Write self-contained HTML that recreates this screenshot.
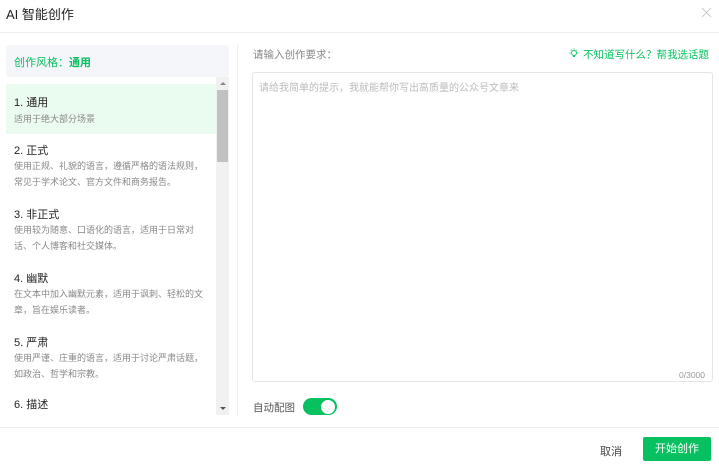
<!DOCTYPE html><html><head><meta charset="utf-8"><style>
*{margin:0;padding:0;box-sizing:border-box}
body{width:719px;height:464px;background:#fff;font-family:"Liberation Sans","Noto Sans CJK SC",sans-serif;position:relative;overflow:hidden;color:#333}
.a{position:absolute;white-space:nowrap}
.t{font-size:11px;color:#222}
.d{font-size:9px;color:#888;line-height:16px}
</style></head><body>
<div class="a" style="left:6px;top:4px;font-size:13px;color:#222">AI 智能创作</div>
<svg class="a" style="left:701px;top:7px" width="11" height="11" viewBox="0 0 11 11"><path d="M1 1L10 10M10 1L1 10" stroke="#bbb" stroke-width="0.8"/></svg>
<div class="a" style="left:0;top:32px;width:719px;height:1px;background:#eee"></div>
<div class="a" style="left:6px;top:45px;width:223px;height:32px;background:#f4f6f9;border-radius:3px"></div>
<div class="a" style="left:14px;top:54px;font-size:11px;color:#07c160">创作风格：<b>通用</b></div>
<div class="a" style="left:216px;top:77px;width:13px;height:338px;background:#f1f1f1"></div>
<div class="a" style="left:217px;top:90px;width:11px;height:72px;background:#c1c1c1"></div>
<div class="a" style="left:220px;top:82px;width:0;height:0;border:3px solid transparent;border-bottom-color:#888;border-top:0"></div>
<div class="a" style="left:220px;top:407px;width:0;height:0;border:3px solid transparent;border-top-color:#555;border-bottom:0"></div>
<div class="a" style="left:6px;top:84px;width:210px;height:50px;background:#eafbef"></div>
<div class="a t" style="left:14px;top:94px">1. 通用</div>
<div class="a d" style="left:14px;top:111px">适用于绝大部分场景</div>
<div class="a t" style="left:14px;top:142px">2. 正式</div>
<div class="a d" style="left:14px;top:158px">使用正规、礼貌的语言，遵循严格的语法规则，<br>常见于学术论文、官方文件和商务报告。</div>
<div class="a t" style="left:14px;top:206px">3. 非正式</div>
<div class="a d" style="left:14px;top:222px">使用较为随意、口语化的语言，适用于日常对<br>话、个人博客和社交媒体。</div>
<div class="a t" style="left:14px;top:270px">4. 幽默</div>
<div class="a d" style="left:14px;top:286px">在文本中加入幽默元素，适用于讽刺、轻松的文<br>章，旨在娱乐读者。</div>
<div class="a t" style="left:14px;top:334px">5. 严肃</div>
<div class="a d" style="left:14px;top:350px">使用严谨、庄重的语言，适用于讨论严肃话题，<br>如政治、哲学和宗教。</div>
<div class="a t" style="left:14px;top:396px">6. 描述</div>
<div class="a" style="left:237px;top:45px;width:1px;height:370px;background:#eee"></div>
<div class="a" style="left:253px;top:47px;font-size:10.5px;color:#888">请输入创作要求：</div>
<svg class="a" style="left:569px;top:48px" width="10" height="11" viewBox="0 0 10 11"><circle cx="5" cy="5" r="2.5" fill="none" stroke="#07c160" stroke-width="0.9"/><path d="M4 8.5h2M5 0.5v1M0.5 5h1M8.5 5h1M1.8 1.8l.7.7M8.2 1.8l-.7.7" stroke="#07c160" stroke-width="0.9"/></svg>
<div class="a" style="left:583px;top:47px;font-size:10.5px;color:#07c160">不知道写什么？帮我选话题</div>
<div class="a" style="left:252px;top:72px;width:461px;height:310px;border:1px solid #e5e5e5;border-radius:3px"></div>
<div class="a" style="left:259px;top:79px;font-size:10px;color:#bbb">请给我简单的提示，我就能帮你写出高质量的公众号文章来</div>
<div class="a" style="left:679px;top:370px;font-size:8.5px;color:#999">0/3000</div>
<div class="a" style="left:253px;top:400px;font-size:10.5px;color:#555">自动配图</div>
<div class="a" style="left:303px;top:398px;width:34px;height:17px;border-radius:9px;background:#07c160"></div>
<div class="a" style="left:321px;top:399.5px;width:14px;height:14px;border-radius:50%;background:#fff"></div>
<div class="a" style="left:0;top:427px;width:719px;height:1px;background:#eee"></div>
<div class="a" style="left:600px;top:443px;font-size:11px;color:#444">取消</div>
<div class="a" style="left:643px;top:437px;width:68px;height:24px;background:#07c160;border-radius:2px;color:#fff;font-size:11px;text-align:center;line-height:24px">开始创作</div>
</body></html>
